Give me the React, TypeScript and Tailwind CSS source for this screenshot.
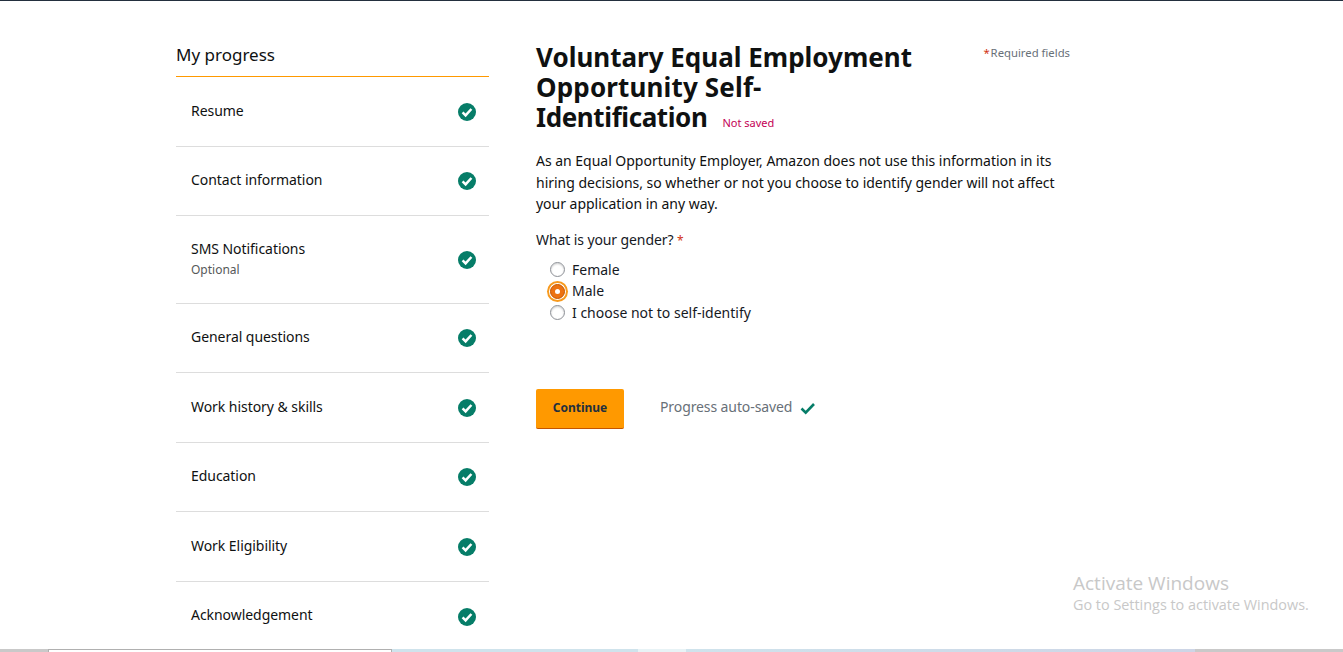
import React from "react";

const steps: { label: string; sub?: string; h: string }[] = [
  { label: "Resume", h: "h-[70px]" },
  { label: "Contact information", h: "h-[69px]" },
  { label: "SMS Notifications", sub: "Optional", h: "h-[88px]" },
  { label: "General questions", h: "h-[69px]" },
  { label: "Work history & skills", h: "h-[70px]" },
  { label: "Education", h: "h-[69px]" },
  { label: "Work Eligibility", h: "h-[70px]" },
  { label: "Acknowledgement", h: "h-[69px]" },
];

function CheckCircle() {
  return (
    <svg width="18" height="18" viewBox="0 0 18 18" className="shrink-0">
      <circle cx="9" cy="9" r="9" fill="#067d68" />
      <path d="M4.6 9.4l3 3L13.4 6" fill="none" stroke="#fff" strokeWidth="2.5" />
    </svg>
  );
}

function Radio({ label, checked }: { label: string; checked?: boolean }) {
  return (
    <div className="flex items-center h-[21.5px] pl-[14px]">
      {checked ? (
        <span className="w-[15px] h-[15px] rounded-full bg-[#ec7211] border border-[#c45500] flex items-center justify-center shadow-[0_0_0_1px_#fff,0_0_0_3px_#f79a1e]">
          <span className="w-[5px] h-[5px] rounded-full bg-white" />
        </span>
      ) : (
        <span className="w-[15px] h-[15px] rounded-full bg-white border border-[#8d9096] shadow-[inset_0_1px_2px_rgba(0,0,0,0.2)]" />
      )}
      <span className="ml-[7px] text-[14px] text-[#16191f] -mt-[1px]">{label}</span>
    </div>
  );
}

export default function App() {
  return (
    <div className="relative h-[652px] overflow-hidden bg-white font-['Noto_Sans',sans-serif] border-t border-[#232f3e]">
      <div className="flex pl-[176px] pt-[39px]">
        <aside className="w-[313px] shrink-0">
          <h2 className="h-[37px] border-b border-[#ff9900] text-[17px] leading-[30px] text-[#0f1111]">
            My progress
          </h2>
          {steps.map((s, i) => (
            <div
              key={s.label}
              className={`${s.h} flex items-center justify-between pl-[15px] pr-[13px] ${
                i < steps.length - 1 ? "border-b border-[#dddddd]" : ""
              }`}
            >
              <div className={i === steps.length - 1 ? "mb-[4px]" : s.sub ? "mb-0" : "mb-[2px]"}>
                <div className="text-[14px] leading-[20px] tracking-[-0.05px] text-[#0f1111]">{s.label}</div>
                {s.sub && <div className="text-[12px] leading-[22px] text-[#565959]">{s.sub}</div>}
              </div>
              <CheckCircle />
            </div>
          ))}
        </aside>

        <main className="ml-[47px] w-[534px] shrink-0">
          <div className="flex justify-between items-start pt-[2px]">
            <h1 className="w-[400px] text-[26px] leading-[30px] font-bold text-[#0f1111]">
              Voluntary Equal Employment <span className="tracking-[0.15px]">Opportunity Self-</span>
              <br />
              <span className="tracking-[-0.4px]">Identification</span>
              <span className="ml-[15px] text-[11px] font-normal text-[#c40055]">Not saved</span>
            </h1>
            <div className="text-[11.3px] leading-[20px] text-[#687078] mt-[1px]">
              <span className="text-[#d13212]">*</span>
              <span className="ml-[1px]">Required fields</span>
            </div>
          </div>
          <p className="mt-[12px] w-[534px] text-[14px] leading-[21.6px] tracking-[-0.02px] text-[#0f1111]">
            As an Equal Opportunity Employer, Amazon does not use this information in its hiring decisions, so whether or not you choose to identify gender will not affect your application in any way.
          </p>
          <div className="mt-[15px] text-[14px] leading-[20px] tracking-[-0.1px] text-[#16191f]">
            What is your gender? <span className="text-[12px] text-[#d13212]">*</span>
          </div>
          <div className="mt-[8px]">
            <Radio label="Female" />
            <Radio label="Male" checked />
            <Radio label="I choose not to self-identify" />
          </div>
          <div className="mt-[66px] flex items-center">
            <button className="w-[88px] h-[40px] bg-[#ff9900] border-b border-[#c45500] rounded-[2px] text-[12px] font-bold text-[#232f3e] pb-[1px]">
              Continue
            </button>
            <span className="ml-[36px] text-[14px] tracking-[-0.1px] text-[#687078] mb-[5px]">Progress auto-saved</span>
            <svg width="16" height="13" viewBox="0 0 16 13" className="ml-[8px] mb-[2px]">
              <path d="M1.5 6.5l4.2 4.2L14 2" fill="none" stroke="#067d68" strokeWidth="2.6" />
            </svg>
          </div>
        </main>
      </div>

      <div className="absolute left-[1073px] top-[570px] text-[#c8c8c8] font-['Open_Sans',sans-serif] whitespace-nowrap">
        <div className="text-[19px] leading-[24px]">Activate Windows</div>
        <div className="text-[14.4px] leading-[20px]">Go to Settings to activate Windows.</div>
      </div>

      <div className="absolute left-0 right-0 bottom-0 h-[3px] flex">
        <div className="w-[48px] bg-[#c9c9c9]" />
        <div className="w-[344px] bg-[#b0b0b0] relative">
          <div className="absolute left-[1px] right-[1px] top-[1px] bottom-0 bg-white" />
        </div>
        <div className="w-[246px] bg-[#cfe3ec]" />
        <div className="w-[48px] bg-[#e8f3f6]" />
        <div className="flex-1 bg-gradient-to-r from-[#cfe3ec] to-[#cdd5e6]" />
        <div className="w-[148px] bg-[#c9c9c9]" />
      </div>
    </div>
  );
}
